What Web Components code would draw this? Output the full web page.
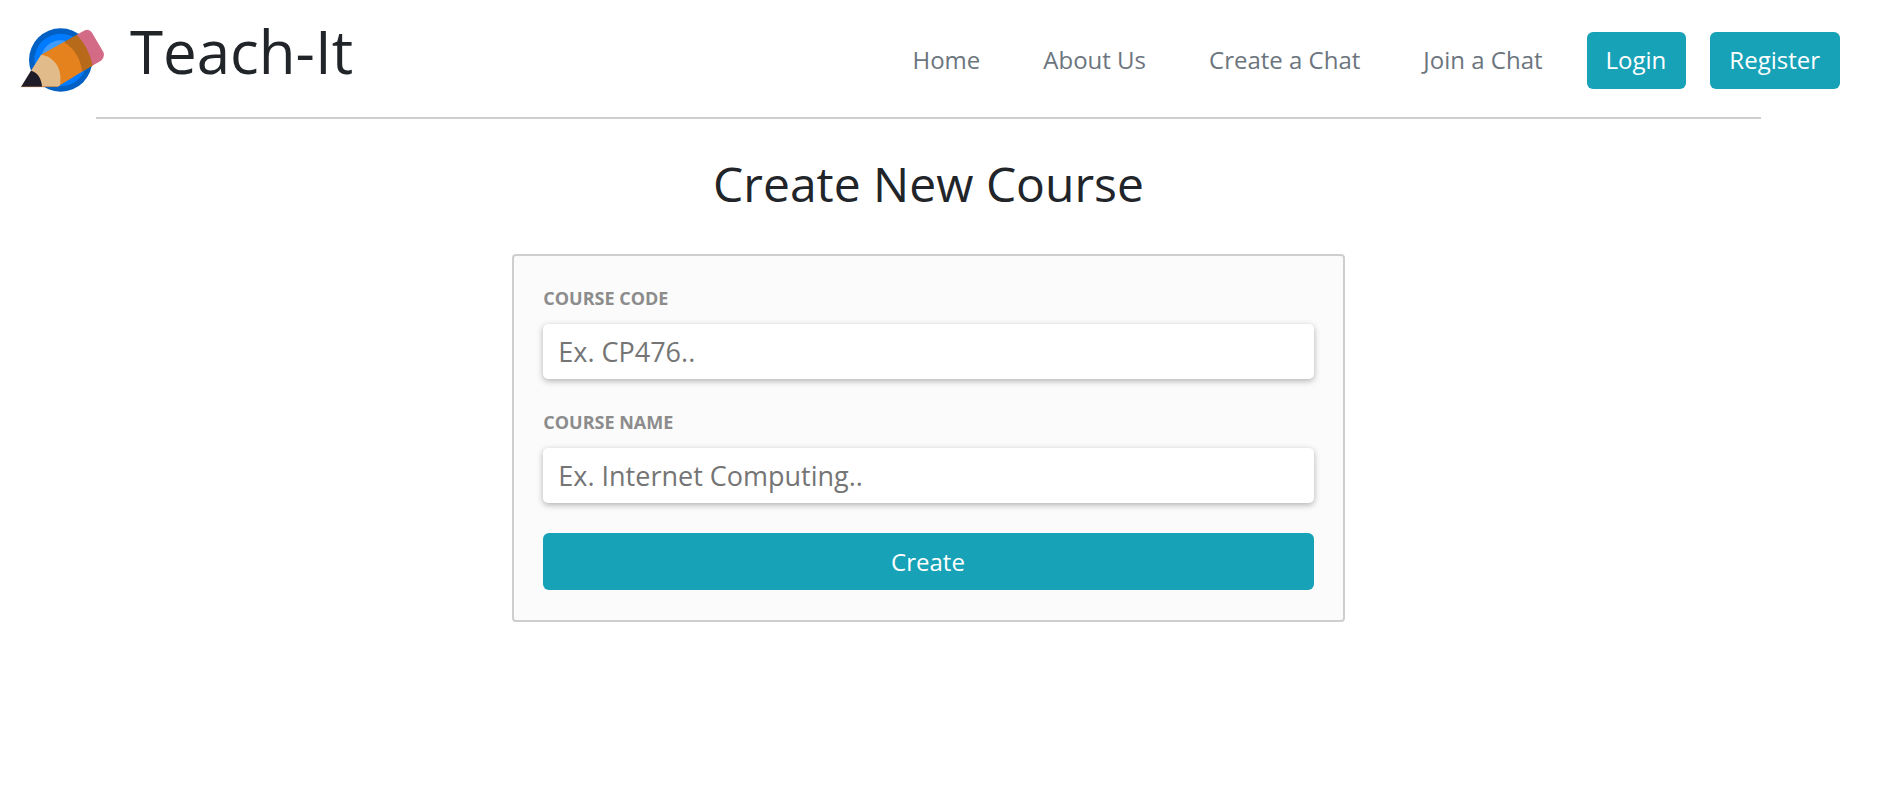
<!DOCTYPE html>
<html lang="en">
<head>
<meta charset="utf-8">
<meta name="viewport" content="width=device-width, initial-scale=1">
<title>Teach-It</title>
<style>
  body {
    margin: 0;
    padding-right: 23px;
    background: #fff;
    color: #212529;
    font: 24px/36px "Open Sans", sans-serif;
  }
</style>
</head>
<body>
<site-header>
  <site-brand slot="brand">Teach-It</site-brand>
  <nav-link href="#home">Home</nav-link>
  <nav-link href="#about">About Us</nav-link>
  <nav-link href="#create">Create a Chat</nav-link>
  <nav-link href="#join">Join a Chat</nav-link>
  <action-button>Login</action-button>
  <action-button>Register</action-button>
</site-header>
<course-form heading="Create New Course">
  <text-field label="Course code" placeholder="Ex. CP476.."></text-field>
  <text-field label="Course name" placeholder="Ex. Internet Computing.."></text-field>
  <action-button>Create</action-button>
</course-form>

<script>
class Base extends HTMLElement {
  connectedCallback() {
    if (this.shadowRoot) return;
    this.attachShadow({ mode: "open" }).innerHTML = this.render();
    this.ready();
  }
  ready() {}
}

customElements.define("site-header", class extends Base {
  render() {
    return `<style>
      :host { display: block; }
      header { display: flex; flex-wrap: wrap; align-items: center; justify-content: space-between;
        padding: 15px 17px 12px 21px; }
      nav { display: flex; flex-wrap: wrap; align-items: center; column-gap: 24px; }
      hr { margin: 0 96px; border: 0; border-top: 2px solid #cecece; }
    </style>
    <header><slot name="brand"></slot><nav><slot></slot></nav></header>
    <hr>`;
  }
});

customElements.define("site-brand", class extends Base {
  render() {
    return `<style>
      :host { display: flex; align-items: center; column-gap: 25px; }
      svg { display: block; width: 84px; height: 66px; }
      h1 { margin: 0 0 18px; font-size: 60px; line-height: 72px; font-weight: 400; }
    </style>
    <svg viewBox="63 81 252 198" aria-hidden="true">
      <circle cx="182" cy="180" r="95" fill="#0060c4"/>
      <circle cx="182" cy="180" r="79" fill="#007bff"/>
      <circle cx="182" cy="180" r="59" fill="#3e9cff"/>
      <path d="M230 104 L252 92 Q267 85 276 98 L310 156 Q316 171 303 182 L277 197 Z" fill="#d36b86"/>
      <path d="M192 126 L230 104 Q268 144 278 197 L245 216 Z" fill="#b66a1a"/>
      <path d="M123 164 L192 126 C222 144 243 178 246 215 L172 260 Z" fill="#e5821e"/>
      <path d="M63 261 L93 212 L123 164 C164 169 188 208 180 256 L172 261 Z" fill="#e2bb8a"/>
      <path d="M63 261 L93 212 C112 216 125 236 126 261 Z" fill="#1e1c29"/>
      <path d="M63 260 H172" stroke="#9b673f" stroke-width="2"/>
    </svg>
    <h1><slot></slot></h1>`;
  }
});

customElements.define("nav-link", class extends Base {
  render() {
    return `<style>
      :host { display: block; }
      a { display: block; padding: 0 20px 0 19px; color: #6c757d; text-decoration: none; }
      a:hover { color: #212529; }
    </style>
    <a href="${this.getAttribute("href")}"><slot></slot></a>`;
  }
});

customElements.define("action-button", class extends Base {
  render() {
    return `<style>
      :host { display: block; }
      button { display: block; width: 100%; height: 57px; padding: 0 20px 0 19px; border: 0; border-radius: 6px;
        background: #17a2b8; color: #fff; font: inherit; cursor: pointer; }
      button:hover { background: #138496; }
    </style>
    <button type="button"><slot></slot></button>`;
  }
});

customElements.define("text-field", class extends Base {
  render() {
    return `<style>
      :host { display: block; }
      label { display: block; margin-bottom: 12px; color: #8c8c8c; font-size: 18px; line-height: 27px;
        font-weight: 700; text-transform: uppercase; }
      input { display: block; box-sizing: border-box; width: 100%; height: 55px; padding: 0 15px;
        border: 0; border-radius: 5px; background: #fff; color: #212529;
        box-shadow: 0 2px 6px rgba(0, 0, 0, .3); font: inherit; font-size: 27px; }
      input::placeholder { color: #757575; }
    </style>
    <label for="field"></label><input id="field" type="text">`;
  }
  ready() {
    this.shadowRoot.querySelector("label").textContent = this.getAttribute("label");
    this.shadowRoot.querySelector("input").placeholder = this.getAttribute("placeholder");
  }
});

customElements.define("course-form", class extends Base {
  render() {
    return `<style>
      :host { display: block; padding: 35px 96px; }
      h2 { margin: 0 0 40px; font-size: 48px; line-height: 60px; font-weight: 400; text-align: center; }
      form { display: flex; flex-direction: column; row-gap: 30px; box-sizing: border-box;
        width: 50%; min-width: 320px; margin: 0 auto; padding: 29px 29px 30px;
        border: 2px solid #cecece; border-radius: 4px; background: #fbfbfb; }
    </style>
    <h2></h2>
    <form><slot></slot></form>`;
  }
  ready() {
    this.shadowRoot.querySelector("h2").textContent = this.getAttribute("heading");
  }
});
</script>
</body>
</html>
